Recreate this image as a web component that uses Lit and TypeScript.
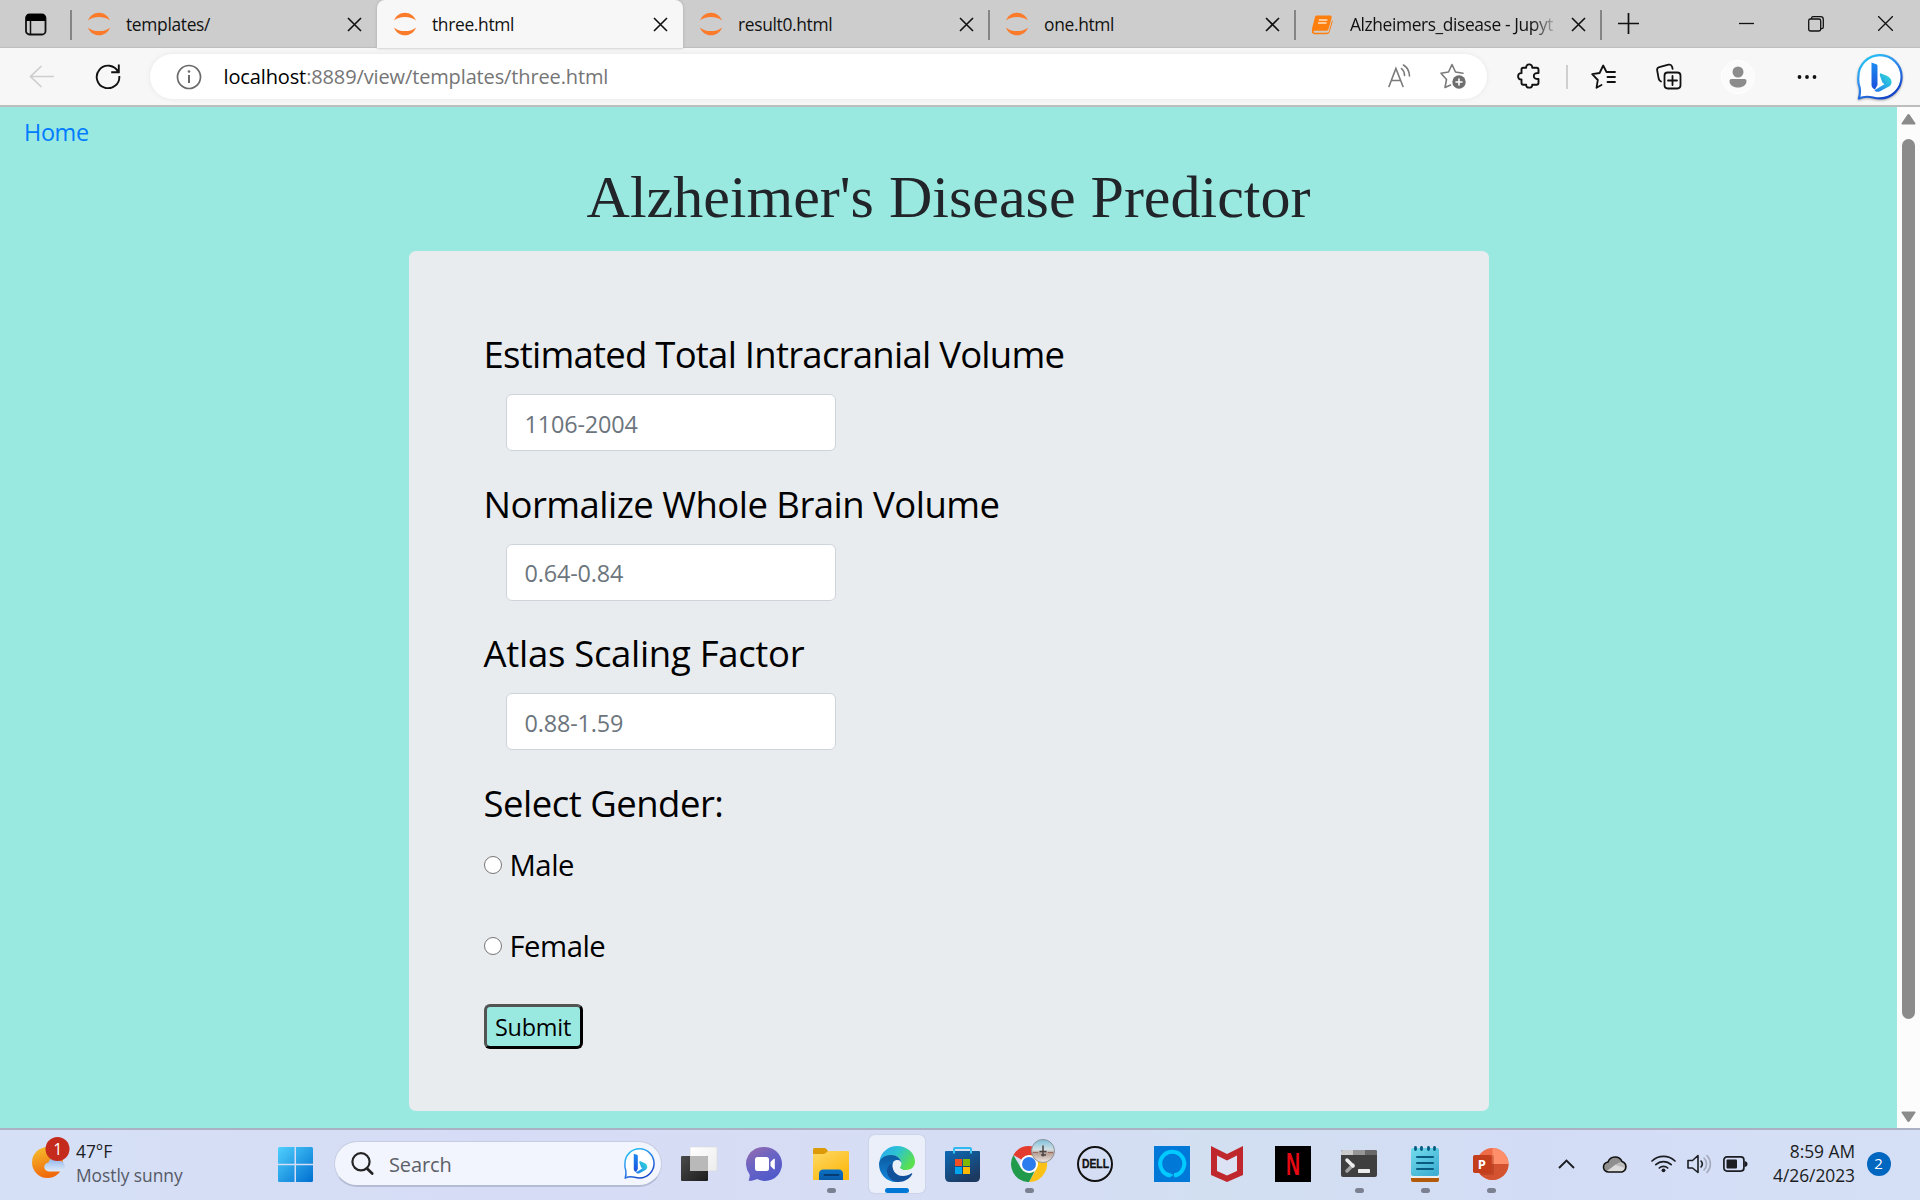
import { LitElement, html, svg, css, nothing, type TemplateResult } from "lit";
import { customElement } from "lit/decorators.js";
import { classMap } from "lit/directives/class-map.js";
import { styleMap } from "lit/directives/style-map.js";

const jupyter = html`<svg class="fav" width="24" height="24" viewBox="0 0 24 24" fill="#fb7b2b">
  <path d="M0 8.600C1.600 4 6 .8 11 .8s9.400 3.200 11 7.800C19.600 6.200 15.600 4.900 11 4.900S2.400 6.200 0 8.600z"/>
  <path d="M0 15.400C1.600 20 6 23.200 11 23.200s9.400-3.200 11-7.800C19.600 17.800 15.600 19.100 11 19.100S2.400 17.800 0 15.400z"/></svg>`;
const book = html`<svg class="fav" width="24" height="24" viewBox="0 0 24 24">
  <g transform="translate(-2)"><path fill="#ff7f0e" d="M6.500 3.500h13.300c1.500 0 2.200 1 1.800 2.400L18.500 17c-.4 1.300-1.400 1.800-2.600 1.800H4.600c-1.200 0-1.300 1.900 0 1.900h12.300c1 0 1.700-.4 2-1.400L22 8.200c.8.500.7 1.200.5 2l-3 10c-.4 1.300-1.500 2-2.800 2H4.700C2.500 22.200.9 20 1.600 18L5 5c.3-1 .6-1.400 1.500-1.500z"/>
  <path stroke="#ffe3c6" stroke-width="1.400" d="M8.800 8h8.600M8 11h8.600"/></g></svg>`;
const cross = html`<svg width="15" height="15" viewBox="0 0 15 15" stroke="#111" stroke-width="1.600" fill="none"><path d="M1 1l13 13M14 1L1 14"/></svg>`;

let bingCount = 0;
const bing = (size: number) => {
  const id = `bing${bingCount++}`;
  return html`<svg width=${size} height=${size} viewBox="0 0 46 46">
  <defs><linearGradient id="${id}a" x1="0" y1="0" x2=".6" y2="1"><stop offset="0" stop-color="#1fd0f5"/><stop offset=".5" stop-color="#2f8df0"/><stop offset="1" stop-color="#1546c8"/></linearGradient>
  <linearGradient id="${id}b" x1="0" y1="0" x2="0" y2="1"><stop offset="0" stop-color="#1d8cf0"/><stop offset="1" stop-color="#1a4fdc"/></linearGradient>
  <linearGradient id="${id}c" x1="1" y1="0" x2="0" y2="1"><stop offset="0" stop-color="#30e0d8"/><stop offset="1" stop-color="#2378ee"/></linearGradient></defs>
  <path fill="#fff" stroke="url(#${id}a)" stroke-width="2.200" stroke-linejoin="round" d="M1.800 44.600c1.400-4 1.600-6 .9-11A22 22 0 0 1 1.400 23 21.600 21.600 0 0 1 23 1.200 21.700 21.700 0 0 1 44.600 23 21.700 21.700 0 0 1 23 44.400c-2.600 0-4.600-.3-7-.9-5-1.200-9.500-1.200-14.200 1.100z"/>
  <path fill="url(#${id}b)" d="M14.500 8.500l4.800 1.700c.8.300 1.200 1 1.200 1.800V31l-2.500 4.500c-2-.6-3.500-2.400-3.500-4.500z"/>
  <path fill="url(#${id}c)" d="M23.500 19.200l6.300 2.600c3.200 1.400 4.700 3.600 4.700 6.200 0 2-.9 3.500-2.500 4.600L23 37.300c-2 1-4.300.5-5.600-1.100l10-6-2-1.600-2.400-6.500c-.5-1.600-.2-2.600.5-2.900z"/></svg>`;
};

interface Tab { title: string; icon: TemplateResult; active?: boolean; }
const TABS: Tab[] = [
  { title: "templates/", icon: jupyter },
  { title: "three.html", icon: jupyter, active: true },
  { title: "result0.html", icon: jupyter },
  { title: "one.html", icon: jupyter },
  { title: "Alzheimers_disease - Jupyt", icon: book },
];

@customElement("browser-tabs")
class BrowserTabs extends LitElement {
  static styles = css`
    :host { display: flex; height: 48px; background: #cdcdcd; font: 17.4px "Open Sans", sans-serif; letter-spacing: -0.33px; color: #111; box-shadow: inset 0 -2px 1px -1px #bdbdbd; }
    svg { display: block; flex: none; }
    .menu { width: 71px; box-sizing: border-box; padding: 13px 0 0 25px; }
    .tab { position: relative; width: 306px; box-sizing: border-box; display: flex; align-items: center; padding: 0 15px 0 17px; }
    .tab.divided::after, .first::before { content: ""; position: absolute; right: -1px; top: 10px; width: 2px; height: 30px; background: #858585; }
    .first::before { right: auto; left: -1px; }
    .active { background: #f7f7f7; border-radius: 8px 8px 0 0; box-shadow: 0 0 3px #aaa; }
    .fav { margin-right: 14px; }
    .title { flex: 1; min-width: 0; white-space: nowrap; line-height: 26px; margin: 0 12px 1px 0; }
    .fade { -webkit-mask-image: linear-gradient(90deg, #000 87%, transparent 100%); mask-image: linear-gradient(90deg, #000 87%, transparent 100%); letter-spacing: -0.4px; }
    .plus { margin: 13px 0 0 17px; }
    .window { margin-left: auto; display: flex; gap: 54px; padding: 16px 27px 0 0; }
  `;
  render() {
    return html`
      <div class="menu"><svg width="22" height="23" viewBox="0 0 22 23"><rect x="1" y="1.500" width="19.500" height="20" rx="3.500" fill="none" stroke="#111" stroke-width="1.800"/><path d="M1 8V4.500a3.500 3.500 0 0 1 3.500-3.500H17a3.500 3.500 0 0 1 3.500 3.500V8z" fill="#000"/><path d="M5.500 8v13" stroke="#111" stroke-width="1.500"/></svg></div>
      ${TABS.map((t, i) => html`<div class=${classMap({ tab: true, active: !!t.active, first: i === 0, divided: i > 1 })}>
        ${t.icon}<span class=${classMap({ title: true, fade: i === 4 })}>${t.title}</span>${cross}</div>`)}
      <svg class="plus" width="21" height="21" viewBox="0 0 21 21" stroke="#111" stroke-width="1.700"><path d="M10.500 0v21M0 10.500h21"/></svg>
      <div class="window">
        <svg width="15" height="15" viewBox="0 0 15 15" stroke="#111" stroke-width="1.300"><path d="M0 7.500h15"/></svg>
        <svg width="16" height="16" viewBox="0 0 16 16" fill="none" stroke="#111" stroke-width="1.300"><rect x=".7" y="3" width="12" height="12" rx="1.800"/><path d="M3.500 3V2A1.600 1.600 0 0 1 5 .7h7.500a2.800 2.800 0 0 1 2.800 2.800V11a1.600 1.600 0 0 1-1.600 1.600h-1"/></svg>
        <svg width="15" height="15" viewBox="0 0 15 15" stroke="#111" stroke-width="1.300"><path d="M0 0l15 15M15 0L0 15"/></svg>
      </div>`;
  }
}

@customElement("browser-toolbar")
class BrowserToolbar extends LitElement {
  static styles = css`
    :host { display: flex; height: 59px; box-sizing: border-box; border-bottom: 2px solid #bdbdbd; background: #f7f7f7; font: 20px "Open Sans", sans-serif; align-items: center; }
    svg { display: block; flex: none; }
    .back { margin-left: 29px; }
    .reload { margin-left: 40px; margin-top: -1px; }
    .address { display: flex; align-items: center; margin-left: 29px; width: 1337px; height: 45px; box-sizing: border-box; border-radius: 23px; background: #fff; box-shadow: 0 0 5px #e6e6e6; padding: 0 20px 0 26px; }
    .url { margin-left: 21.500px; flex: 1; color: #757575; line-height: 28px; letter-spacing: -0.130px; }
    .host { color: #000; }
    .star { margin-left: 27px; }
    .puzzle { margin: -1px 0 0 30px; }
    .bar { width: 2px; height: 24px; background: #cfcfcf; margin: 0 23px 0 25px; }
    .coll { margin-left: 40px; }
    .person { margin-left: 38.500px; }
    .dots { margin-left: 42px; }
    .bing { margin-left: 40px; filter: drop-shadow(0 1px 1px #aaa); }
  `;
  render() {
    return html`
      <svg class="back" width="26" height="24" viewBox="0 0 26 24" fill="none" stroke="#cdcdcd" stroke-width="1.700"><path d="M25 11.500H1.500M12.500 1L1.500 11.500l11 10.500"/></svg>
      <svg class="reload" width="26" height="26" viewBox="0 0 26 26" fill="none" stroke="#111" stroke-width="1.900"><path d="M23.200 9A11.300 11.300 0 1 0 24.300 13M23.800 1.500v7.700h-7.600"/></svg>
      <div class="address">
        <svg width="26" height="26" viewBox="0 0 26 26" fill="none" stroke="#6a6a6a" stroke-width="1.700"><circle cx="13" cy="13" r="11.500"/><path d="M13 11v8" stroke-width="2"/><circle cx="13" cy="7.500" r="1.300" fill="#6a6a6a" stroke="none"/></svg>
        <div class="url"><span class="host">localhost</span>:8889/view/templates/three.html</div>
        <svg width="26" height="26" viewBox="0 0 26 26" fill="none" stroke="#7a7a7a" stroke-width="1.600" stroke-linecap="round"><path d="M3 22.500L9.900 4.500l7.100 18M5.500 16.500h9"/><path d="M15.500 4.500a9 9 0 0 1 3 7M17.500 1a13.500 13.500 0 0 1 6 11"/></svg>
        <svg class="star" width="28" height="27" viewBox="0 0 28 27" fill="none" stroke="#7a7a7a" stroke-width="1.600" stroke-linejoin="round" stroke-linecap="round"><path d="M11.500 22l-5.500 2.500 1.500-8L2 10.200l7.500-1.200L13 1.500l3.500 7.500 7.500 1.200"/><circle cx="20" cy="19" r="6.700" fill="#6f6f6f" stroke="none"/><path stroke="#fff" d="M20 16v6M17 19h6"/></svg>
      </div>
      <svg class="puzzle" width="24" height="26" viewBox="0 0 24 26" fill="none" stroke="#111" stroke-width="1.900" stroke-linejoin="round"><path d="M4.500 6.500q0-1.700 1.700-1.700h3c-.2-2.200 1-3.400 3-3.400s3.200 1.200 3 3.400h4.300q2 0 2 2V10c-2.500-.2-4.700.6-4.700 3s2.200 3.200 4.700 3v3.800q0 2-2 2h-4.300c.2 1.900-1 2.800-3 2.800s-3.200-.9-3-2.800h-3q-1.700 0-1.700-1.700v-3.600c-2.200.2-3.400-1.200-3.400-3.200s1.200-3.400 3.400-3.200z"/></svg>
      <div class="bar"></div>
      <svg width="25" height="26" viewBox="0 0 25 26" fill="none" stroke="#111" stroke-width="1.800" stroke-linejoin="round" stroke-linecap="round"><path d="M10.500 21L5.500 23.800 6.800 16 1.200 10.200l7.400-1.200L12.200 1.500 15.500 8h8.500M16.500 13h7.500M16.500 18h7.500"/></svg>
      <svg class="coll" width="26" height="27" viewBox="0 0 26 27" fill="none" stroke="#111" stroke-width="1.800" stroke-linecap="round"><rect x="8.500" y="9.500" width="16" height="16" rx="3.200"/><path d="M16.500 13v9M12 17.500h9M5 18.500C3.500 18 3 17 2.700 15.800L1.200 7.500C.9 5.700 1.600 4.600 3.300 4.200L12.500 1.700c1.800-.4 3 .3 3.500 1.800l.6 2.300"/></svg>
      <svg class="person" width="34" height="34" viewBox="0 0 34 34"><circle cx="17" cy="17" r="16.500" fill="#fbfbfb" stroke="#fff"/><circle cx="17" cy="12" r="5.500" fill="#8c8c8c"/><path fill="#8c8c8c" d="M10.500 19h13c1.300 0 2 .8 2 2 0 4-3.500 6.500-8.500 6.500S8.500 25 8.500 21c0-1.200.7-2 2-2z"/></svg>
      <svg class="dots" width="20" height="6" viewBox="0 0 20 6" fill="#111"><circle cx="2.500" cy="3" r="1.900"/><circle cx="10" cy="3" r="1.900"/><circle cx="17.500" cy="3" r="1.900"/></svg>
      <div class="bing">${bing(46)}</div>`;
  }
}

@customElement("predictor-page")
class PredictorPage extends LitElement {
  static styles = css`
    :host { display: flex; height: 1021px; background: #9ae9e1; font-family: "Open Sans", sans-serif; overflow: hidden; }
    .page { flex: 1; display: flex; flex-direction: column; padding-top: 7px; align-items: center; }
    .home { align-self: flex-start; margin-left: 24px; font-size: 23.400px; line-height: 36px; letter-spacing: -0.350px; color: #007bff; text-decoration: none; }
    h1 { margin: 11px 0 18px; font: 500 60px/72px "Liberation Serif", serif; color: #212529; }
    .card { width: 1080px; height: 860px; box-sizing: border-box; border-radius: 7px; background: #e9ecef; padding: 76px 75px 0; color: #000; display: flex; flex-direction: column; align-items: flex-start; }
    .label { font-size: 36.500px; line-height: 54px; height: 67px; letter-spacing: -0.5px; white-space: nowrap; }
    input[type="text"] { display: block; margin: 0 0 25.500px 22px; width: 330px; height: 57px; box-sizing: border-box; border: 1px solid #ced4da; border-radius: 6px; background: #fff; padding: 2px 18px 0; font: 23.400px "Open Sans", sans-serif; letter-spacing: -0.150px; }
    input::placeholder { color: #6c757d; opacity: 1; }
    .choice { display: flex; align-items: center; height: 45px; margin-bottom: 36px; font-size: 29.300px; line-height: 40px; letter-spacing: -0.5px; }
    .choice span { margin-top: -1px; }
    .choice input { appearance: none; box-sizing: border-box; width: 18px; height: 18px; margin: 0 8px 0 0; border: 1.500px solid #767676; border-radius: 50%; background: #fff; }
    button { height: 45px; width: 99px; padding: 2px 0 0; border: 3px outset #000; border-radius: 6px; background: #9ae9e1; color: #000; font: 23.400px/36px "Open Sans", sans-serif; letter-spacing: -0.2px; margin-top: -1px; }
    .scroll { width: 23px; background: #fcfcfc; display: flex; flex-direction: column; align-items: center; }
    .scroll svg { display: block; margin: 7px 0 14px; }
    .thumb { width: 13px; height: 880px; border-radius: 7px; background: #8b8b8b; }
    .scroll .down { margin: auto 0 6px; }
  `;
  private fields = [
    { label: "Estimated Total Intracranial Volume", hint: "1106-2004", tracking: -0.75 },
    { label: "Normalize Whole Brain Volume", hint: "0.64-0.84", tracking: -0.52 },
    { label: "Atlas Scaling Factor", hint: "0.88-1.59", tracking: -0.3 },
  ];
  render() {
    return html`
      <div class="page">
        <a class="home" href="#">Home</a>
        <h1>Alzheimer's Disease Predictor</h1>
        <div class="card">
          ${this.fields.map((f) => html`<label class="label" style=${styleMap({ letterSpacing: `${f.tracking}px` })}>${f.label}</label><input type="text" placeholder=${f.hint}>`)}
          <div class="label">Select Gender:</div>
          ${["Male", "Female"].map((g) => html`<label class="choice"><input type="radio" name="gender"><span>${g}</span></label>`)}
          <button>Submit</button>
        </div>
      </div>
      <div class="scroll">
        <svg width="15" height="11" viewBox="0 0 15 11" fill="#8b8b8b"><path d="M6.300.8a1.400 1.400 0 0 1 2.400 0l5.700 8.500c.4.700 0 1.200-.7 1.200H1.300C.6 10.500.2 10 .6 9.300z"/></svg>
        <div class="thumb"></div>
        <svg class="down" width="15" height="11" viewBox="0 0 15 11" fill="#8b8b8b"><path d="M6.300 10.200a1.400 1.400 0 0 0 2.400 0l5.700-8.500c.4-.7 0-1.200-.7-1.200H1.300C.6.500.2 1 .6 1.700z"/></svg>
      </div>`;
  }
}

interface App { name: string; art: unknown; open?: boolean; current?: boolean; }
const APPS: App[] = [
  { name: "taskview", art: svg`<defs><linearGradient id="tv" x2="1" y2="1"><stop stop-color="#4a4a4a"/><stop offset="1" stop-color="#1d1d1d"/></linearGradient><linearGradient id="tw" x2="1" y2="1"><stop stop-color="#fff"/><stop offset="1" stop-color="#ececec"/></linearGradient></defs><rect x="9" y="1" width="27" height="24" rx="1" fill="url(#tw)" stroke="#d8d8dc" stroke-width=".6"/><rect x="0" y="10" width="27" height="25" rx="1" fill="url(#tv)"/><path fill="#b9b9b9" d="M9 10h17q1 0 1 1v14H9z"/>` },
  { name: "chat", art: svg`<defs><linearGradient id="ch" x2=".6" y2="1"><stop stop-color="#9a6bab"/><stop offset=".5" stop-color="#6a64c4"/><stop offset="1" stop-color="#5059c9"/></linearGradient></defs><path fill="url(#ch)" d="M18 1a17 17 0 1 1-8 32c-3 1.500-6 2-8.500 1.700 1-2 1.500-4 1-6.500A17 17 0 0 1 18 1z"/><rect x="8" y="11" width="14" height="14" rx="2.500" fill="#fff"/><path fill="#fff" d="M23.500 16l3-3q1.300-1 1.300.5v9q0 1.500-1.300.5l-3-3z"/>` },
  { name: "explorer", open: true, art: svg`<defs><linearGradient id="fo" x2=".7" y2="1"><stop stop-color="#ffd964"/><stop offset="1" stop-color="#fbb80f"/></linearGradient><linearGradient id="fb" x2="0" y2="1"><stop stop-color="#0a70c4"/><stop offset="1" stop-color="#0a5ca8"/></linearGradient></defs><path fill="#dd9a08" d="M0 3.500Q0 2 1.500 2H11q1.500 0 2.500 1.200L15.500 6 12 9H0z"/><path fill="url(#fo)" d="M0 8h11l4.500-3H35q1 0 1 1v28H0z"/><path fill="url(#fb)" d="M6 34v-6q0-4.500 4.500-4.500h15q4.500 0 4.500 4.500v6z"/><path stroke="#073d73" stroke-width="1.800" stroke-linecap="round" d="M11.500 29h14"/>` },
  { name: "edge", current: true, art: svg`<defs><linearGradient id="e1" x1="0" x2="1" y2=".5"><stop stop-color="#2ba6f2"/><stop offset=".5" stop-color="#2cc3d2"/><stop offset="1" stop-color="#5be04f"/></linearGradient><linearGradient id="e2" x2="0" y2="1"><stop stop-color="#0c5a9e"/><stop offset="1" stop-color="#1387de"/></linearGradient></defs><path fill="url(#e1)" d="M.5 15C2 6 9.500 0 18 0c10 0 18 7 18 15.500 0 5-3.800 8.500-9 8.500-3.500 0-6-1.200-6-2.600 0-1 1.300-1.700 1.300-4.200 0-4-3.800-7.700-8.800-7.700C8 10 3 13 .5 15z"/><path fill="url(#e2)" d="M0 18c0-5 5.500-9 12-9 7 0 10.300 4.500 10.300 8.500-.8-2-2.300-3-4.300-3-3.500 0-5 3.500-5 6.500 0 6 5 11.500 11 12.500-2 1.600-4.500 2.500-7 2.500C7.500 36 0 28 0 18z"/><path fill="#11509b" d="M13.500 17.500c-.7 5 2 12.500 10.500 12.500 3.500 0 6-1 8.200-2.500.7-.4 1.300.2.900.8C30.500 33 25.500 36 19.500 36 12 36 8 29.500 8 25c0-4 2.500-6.500 5.500-7.500z"/><path fill="#eaeffa" d="M22.300 17.700a4.100 4.100 0 0 0-8.200.8c0 5.200 4.200 9.500 10.900 9.500 3 0 5-.6 7-1.600l2.500-4.400c-2 1.500-4.500 2.200-7.500 2.200-3.700 0-6-1.400-6-2.800 0-1 1.300-1.500 1.300-3.700z"/>` },
  { name: "store", art: svg`<defs><linearGradient id="st" x2=".6" y2="1"><stop stop-color="#0d6ab5"/><stop offset="1" stop-color="#1c3960"/></linearGradient></defs><path fill="none" stroke="#2fb9ee" stroke-width="2" d="M9 7V3q0-1 1-1h15q1 0 1 1v4"/><path fill="url(#st)" d="M0 6q0-1 1-1h33q1 0 1 1v25q0 5-5 5H5q-5 0-5-5z"/><path stroke="#39c6f3" stroke-width="2" d="M9 4v3.500M26 4v3.500"/><path fill="#f25022" d="M10 13h7v7h-7z"/><path fill="#7fba00" d="M18 13h7v7h-7z"/><path fill="#00a4ef" d="M10 21h7v7h-7z"/><path fill="#ffb900" d="M18 21h7v7h-7z"/>` },
  { name: "chrome", open: true, art: svg`<defs><linearGradient id="sky" x2="0" y2="1"><stop stop-color="#7cc0dc"/><stop offset=".45" stop-color="#d4e0e4"/><stop offset=".58" stop-color="#b39d92"/><stop offset="1" stop-color="#efe8e2"/></linearGradient></defs><path fill="#e33b2e" d="M18 18L2.400 9A18 18 0 0 1 33.600 9H18z"/><path fill="#fbc116" d="M18 18V9h15.600A18 18 0 0 1 18 36l7.800-13.500z"/><path fill="#229a4c" d="M2.400 9l7.800 13.500L18 27l-1 9A18 18 0 0 1 2.400 9z"/><path fill="#229a4c" d="M10 22.500L18 27l5.500-1.500L18 36h-2z"/><circle cx="18" cy="18" r="9" fill="#fff"/><circle cx="18" cy="18" r="7" fill="#2c7cf0"/><circle cx="32" cy="5" r="11.500" fill="url(#sky)" stroke="#8d9298" stroke-width="1"/><path stroke="#4b4546" stroke-width="1.500" d="M32-.5v11M28.500 5.500h7M30 9h5"/><path stroke="#9d6a60" d="M22 6.500h5M37 6.500h5"/>` },
  { name: "dell", art: svg`<circle cx="18" cy="18" r="17" fill="none" stroke="#111" stroke-width="2"/><text x="5" y="22.300" textLength="27" lengthAdjust="spacingAndGlyphs" font-family="Liberation Sans" font-weight="700" font-size="12" fill="#111" stroke="#111" stroke-width=".3">DELL</text>` },
  { name: "alexa", art: svg`<path fill="#0078d7" d="M0 0h36v36H0z"/><path fill="none" stroke="#00caff" stroke-width="4" d="M16.500 29.500A12 12 0 1 1 20 29.500"/><path fill="#00caff" d="M15 27l4.500 2-3 2z"/>` },
  { name: "mcafee", art: svg`<path fill="#c0272d" d="M2 0l16 8 16-8v29l-16 7L2 29z"/><path fill="#dbe2f3" d="M8 9.500l10 5 10-5v15.500l-10 4.500L8 25z"/>` },
  { name: "netflix", art: svg`<path d="M0 0h36v36H0z"/><text x="11" y="29" textLength="14" lengthAdjust="spacingAndGlyphs" font-family="Liberation Sans" font-weight="700" font-size="32" fill="#e50914">N</text>` },
  { name: "terminal", open: true, art: svg`<path fill="#3f3f3f" d="M0 6q0-2 2-2h32q2 0 2 2v23q0 2-2 2H2q-2 0-2-2z"/><path fill="#cbcbcb" d="M0 9V6q0-2 2-2h10v5z"/><path fill="#969696" d="M12 4h12v5H12z"/><path fill="#686868" d="M24 4h10q2 0 2 2v3H24z"/><path fill="none" stroke="#a2a2a2" stroke-width="3.500" stroke-linecap="round" d="M6 25l6-6"/><path fill="none" stroke="#eee" stroke-width="3.500" stroke-linecap="round" d="M6 14l6 6"/><rect x="17" y="23" width="12" height="4" rx=".8" fill="#ececec"/>` },
  { name: "notepad", open: true, art: svg`<defs><linearGradient id="np" x2=".7" y2="1"><stop stop-color="#73dcec"/><stop offset="1" stop-color="#3fb0d3"/></linearGradient></defs><rect x="4" y="26" width="28" height="10" rx="2" fill="#b35a0a"/><path fill="#eee" d="M4 26h28v6H4z"/><rect x="4" y="2" width="28" height="28" rx="2" fill="url(#np)"/><g stroke="#075a80" stroke-width="2" stroke-linecap="round"><path d="M10 11h16M10 17h16M10 23h16"/><path stroke-width="2.800" d="M8.500 1.500v2M14.500 1.500v2M21.500 1.500v2M27.500 1.500v2"/></g>` },
  { name: "powerpoint", open: true, art: svg`<circle cx="19.500" cy="18" r="16" fill="#ed6c47"/><path fill="#ff8f6b" d="M19.500 2a16 16 0 0 1 16 16h-16z"/><path fill="#d35230" d="M3.500 18h32a16 16 0 0 1-32 0z"/><path fill="#9b3218" opacity=".35" d="M18 9h1q2 0 2 2v16q0 2-2 2H7z"/><rect x="0" y="9" width="18.500" height="18" rx="1.800" fill="#c43e1c"/><text x="4.800" y="22.500" font-family="Open Sans" font-weight="700" font-size="13" fill="#fff">P</text>` },
];

@customElement("task-bar")
class TaskBar extends LitElement {
  static styles = css`
    :host { display: flex; height: 72px; box-sizing: border-box; border-top: 2px solid #abb1c4; background: linear-gradient(90deg, #d5e0f6, #d6dcf5 25%, #d5ddf4 55%, #d2dff1 63%, #d3dcf5 80%, #d5e0f6); font: 17.400px/24px "Open Sans", sans-serif; letter-spacing: -0.050px; color: #1b1d22; align-items: center; padding-bottom: 2px; }
    svg { display: block; flex: none; overflow: visible; }
    .weather { display: flex; margin-left: 32px; width: 246px; gap: 7px; align-items: center; }
    .forecast { color: #555a66; }
    .reading { margin-top: -2px; }
    .start { margin-right: 21px; }
    .search { display: flex; align-items: center; width: 328px; height: 46px; box-sizing: border-box; border: 1px solid #c6cee2; border-bottom: 2px solid #b3bcd3; border-radius: 23px; background: #f2f5fd; padding: 0 6px 0 16px; font-size: 20px; color: #5c6068; letter-spacing: -0.1px; }
    .search span { flex: 1; margin: 2px 0 0 15px; }
    .apps { display: flex; gap: 10px; margin-left: 9px; }
    .app { position: relative; box-sizing: border-box; width: 56px; height: 58px; padding: 11px 10px; border-radius: 6px; }
    .alexa { margin-left: 11px; }
    .mcafee { margin-left: -11px; }
    .current { background: #eaeffa; box-shadow: 0 0 1px 1px #ccd4ea; }
    .open::after, .current::after { content: ""; position: absolute; bottom: 0; left: 23.500px; width: 9px; height: 5px; border-radius: 2.500px; background: #7b8190; }
    .current::after { left: 16px; width: 24px; background: #0078d7; }
    .tray { margin-left: auto; display: flex; align-items: center; padding-right: 29.500px; }
    .cloud { margin-left: 28px; } .wifi { margin-left: 23px; } .sound { margin-left: 11px; } .battery { margin-left: 11.500px; }
    .clock { width: 107px; text-align: right; margin-top: -2px; }
    .count { margin-left: 11.500px; width: 24px; height: 24px; border-radius: 50%; background: #0067c0; color: #fff; text-align: center; font-size: 15px; line-height: 23px; }
  `;
  render() {
    return html`
      <div class="weather">
        <svg width="37" height="48" viewBox="0 0 37 48"><defs><linearGradient id="sun" x2=".3" y2="1"><stop stop-color="#f6c22f"/><stop offset="1" stop-color="#f0690b"/></linearGradient><linearGradient id="cl" x2="0" y2="1"><stop stop-color="#8fb4ea"/><stop offset="1" stop-color="#dfeafb"/></linearGradient></defs>
          <circle cx="15.500" cy="22.500" r="15.500" fill="url(#sun)"/><path fill="url(#cl)" d="M17 31.500a4.500 4.500 0 0 1-.5-9 6 6 0 0 1 11-1.500 5.300 5.300 0 0 1 1 10.500z"/><circle cx="25.500" cy="9" r="12" fill="#c42b1c"/><text x="25.800" y="14.500" text-anchor="middle" font-family="Open Sans" font-size="16" fill="#fff">1</text></svg>
        <div class="reading"><div>47°F</div><div class="forecast">Mostly sunny</div></div>
      </div>
      <svg class="start" width="35" height="35" viewBox="0 0 35 35"><defs><linearGradient id="win" gradientUnits="userSpaceOnUse" x1="0" y1="0" x2="35" y2="35"><stop stop-color="#4fd0fd"/><stop offset="1" stop-color="#006fd0"/></linearGradient></defs><path fill="url(#win)" d="M1.500 0h15v16.700H0V1.500Q0 0 1.500 0zM18 0h15.500Q35 0 35 1.500v15.200H18zM0 18.300h16.500V35h-15Q0 35 0 33.500zM18 18.300h17v15.200q0 1.500-1.500 1.500H18z"/></svg>
      <div class="search">
        <svg width="23" height="23" viewBox="0 0 23 23" fill="none" stroke="#252525" stroke-width="2.200" stroke-linecap="round"><circle cx="10" cy="9.800" r="8.600"/><path stroke-width="2.800" d="M16 16.500l5.200 5"/></svg>
        <span>Search</span>${bing(31)}
      </div>
      <div class="apps">${APPS.map((a) => html`<div class=${classMap({ app: true, [a.name]: true, open: !!a.open, current: !!a.current })}><svg width="36" height="36" viewBox="0 0 36 36">${a.art ?? nothing}</svg></div>`)}</div>
      <div class="tray">
        <svg width="17" height="10" viewBox="0 0 17 10" fill="none" stroke="#1b1d22" stroke-width="1.900"><path d="M1 9l7.500-7.500L16 9"/></svg>
        <svg class="cloud" width="25" height="17" viewBox="0 0 25 17"><path fill="#dcdcdc" d="M6 16A5 5 0 0 1 5 6a7.500 7.500 0 0 1 14-.500A5.500 5.500 0 0 1 19 16z"/><path fill="#8f8f8f" d="M2 8C4 5 5 6 5 6a7.500 7.500 0 0 1 14-.5L12 9l-8 6C0 13 1 9 2 8z"/><path fill="#bdbdbd" d="M12 9l7-3.500c4 0 5.500 4 4.500 7z"/><path fill="none" stroke="#111" stroke-width="1.600" d="M6 16A5 5 0 0 1 5 6a7.500 7.500 0 0 1 14-.500A5.500 5.500 0 0 1 19 16z"/></svg>
        <svg class="wifi" width="25" height="18" viewBox="0 0 25 18" fill="none" stroke="#1b1d22" stroke-width="1.700" stroke-linecap="round"><path d="M1 6a16.500 16.500 0 0 1 23 0M4.800 9.700a11 11 0 0 1 15.400 0M8.300 13a6 6 0 0 1 8.400 0"/><circle cx="12.500" cy="15.300" r="1.900" fill="#1b1d22" stroke="none"/></svg>
        <svg class="sound" width="25" height="20" viewBox="0 0 25 20" fill="none" stroke="#1b1d22" stroke-width="1.600" stroke-linejoin="round" stroke-linecap="round"><path d="M1 6.500h4.500L11 1.500v17L5.500 14H1zM14 7a4.500 4.500 0 0 1 0 6"/><path stroke="#a2a9ba" d="M17 4a8.500 8.500 0 0 1 0 12M20 1.500a12.500 12.500 0 0 1 0 17"/></svg>
        <svg class="battery" width="25" height="16" viewBox="0 0 25 16"><rect x=".9" y=".9" width="20" height="14.200" rx="3" fill="none" stroke="#1b1d22" stroke-width="1.700"/><rect x="3.500" y="3.500" width="10.500" height="9" rx="1" fill="#1b1d22"/><path fill="#1b1d22" d="M21.500 5q3 .5 3 3t-3 3z"/></svg>
        <div class="clock"><div>8:59 AM</div><div>4/26/2023</div></div>
        <div class="count">2</div>
      </div>`;
  }
}

@customElement("app-root")
class AppRoot extends LitElement {
  static styles = css`
    :host { display: flex; flex-direction: column; width: 1920px; height: 1200px; overflow: hidden; }
  `;
  render() {
    return html`<browser-tabs></browser-tabs><browser-toolbar></browser-toolbar><predictor-page></predictor-page><task-bar></task-bar>`;
  }
}
